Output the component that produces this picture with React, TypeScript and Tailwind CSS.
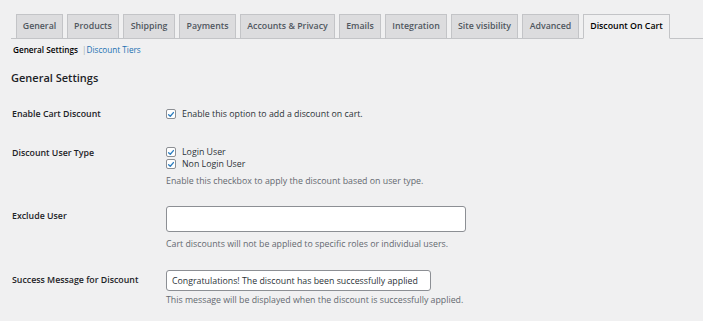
import React from "react";

const tabs: { label: string; w: string; active?: boolean }[] = [
  { label: "General", w: "w-[47px]" },
  { label: "Products", w: "w-[52px]" },
  { label: "Shipping", w: "w-[52px]" },
  { label: "Payments", w: "w-[57px]" },
  { label: "Accounts & Privacy", w: "w-[95px]" },
  { label: "Emails", w: "w-[42px]" },
  { label: "Integration", w: "w-[62px]" },
  { label: "Site visibility", w: "w-[67px]" },
  { label: "Advanced", w: "w-[57px]" },
  { label: "Discount On Cart", w: "w-[87px]", active: true },
];

function Check() {
  return (
    <span className="flex h-[10px] w-[10px] shrink-0 items-center justify-center rounded-[2px] border border-[#8c8f94] bg-white">
      <svg viewBox="0 0 10 10" className="h-[9px] w-[9px]">
        <path d="M2 5.2 L4.1 7.2 L8 2.6" fill="none" stroke="#2f7fc1" strokeWidth="1.7" strokeLinecap="round" strokeLinejoin="round" />
      </svg>
    </span>
  );
}

export default function App() {
  return (
    <div
      className="h-[321px] w-[703px] overflow-hidden bg-[#f0f0f1] text-[#1d2327]"
      style={{ fontFamily: '"Open Sans", "Noto Sans", sans-serif' }}
    >
      <div className="ml-[11px] flex gap-[4px] border-b border-[#c3c4c7] pl-[5px] pt-[14px]">
        {tabs.map((t) => (
          <div
            key={t.label}
            className={
              "-mb-px flex h-[25px] items-center justify-center border border-[#c3c4c7] text-[8.8px] font-semibold whitespace-nowrap " +
              t.w +
              (t.active ? " border-b-[#f0f0f1] bg-[#f0f0f1] text-[#000]" : " bg-[#dcdcde] text-[#50575e]")
            }
          >
            {t.label}
          </div>
        ))}
      </div>

      <div className="ml-[13px] mt-[5px] flex items-center text-[8.2px] leading-[12px]">
        <span className="font-semibold text-[#000]">General Settings</span>
        <span className="ml-[4px] text-[#a7aaad]">|</span>
        <span className="text-[#2271b1]">Discount Tiers</span>
      </div>

      <div className="ml-[11px] mt-[14px] text-[11px] font-semibold leading-[16px] text-[#1d2327]">General Settings</div>

      <div className="ml-[12px] mt-[22px] flex flex-col text-[8.8px] leading-[12px]">
        <div className="flex">
          <div className="w-[154px] font-semibold">Enable Cart Discount</div>
          <div className="flex items-center gap-[6px] text-[#2c3338]">
            <Check />
            <span>Enable this option to add a discount on cart.</span>
          </div>
        </div>

        <div className="mt-[26px] flex">
          <div className="w-[154px] pt-[1px] font-semibold">Discount User Type</div>
          <div className="flex flex-col text-[#2c3338]">
            <div className="flex items-center gap-[6px]">
              <Check />
              <span>Login User</span>
            </div>
            <div className="flex items-center gap-[6px]">
              <Check />
              <span>Non Login User</span>
            </div>
            <div className="mt-[5px] text-[#646970]">Enable this checkbox to apply the discount based on user type.</div>
          </div>
        </div>

        <div className="mt-[19px] flex">
          <div className="w-[154px] pt-[4px] font-semibold">Exclude User</div>
          <div className="flex flex-col">
            <div className="h-[26px] w-[300px] rounded-[3px] border border-[#8c8f94] bg-white" />
            <div className="mt-[6px] text-[#646970]">Cart discounts will not be applied to specific roles or individual users.</div>
          </div>
        </div>

        <div className="mt-[20px] flex">
          <div className="w-[154px] pt-[4px] font-semibold">Success Message for Discount</div>
          <div className="flex flex-col">
            <div className="flex h-[21px] w-[265px] items-center whitespace-nowrap rounded-[3px] border border-[#8c8f94] bg-white pl-[5px] text-[#2c3338]">
              Congratulations! The discount has been successfully applied
            </div>
            <div className="mt-[3px] text-[#646970]">This message will be displayed when the discount is successfully applied.</div>
          </div>
        </div>
      </div>
    </div>
  );
}
